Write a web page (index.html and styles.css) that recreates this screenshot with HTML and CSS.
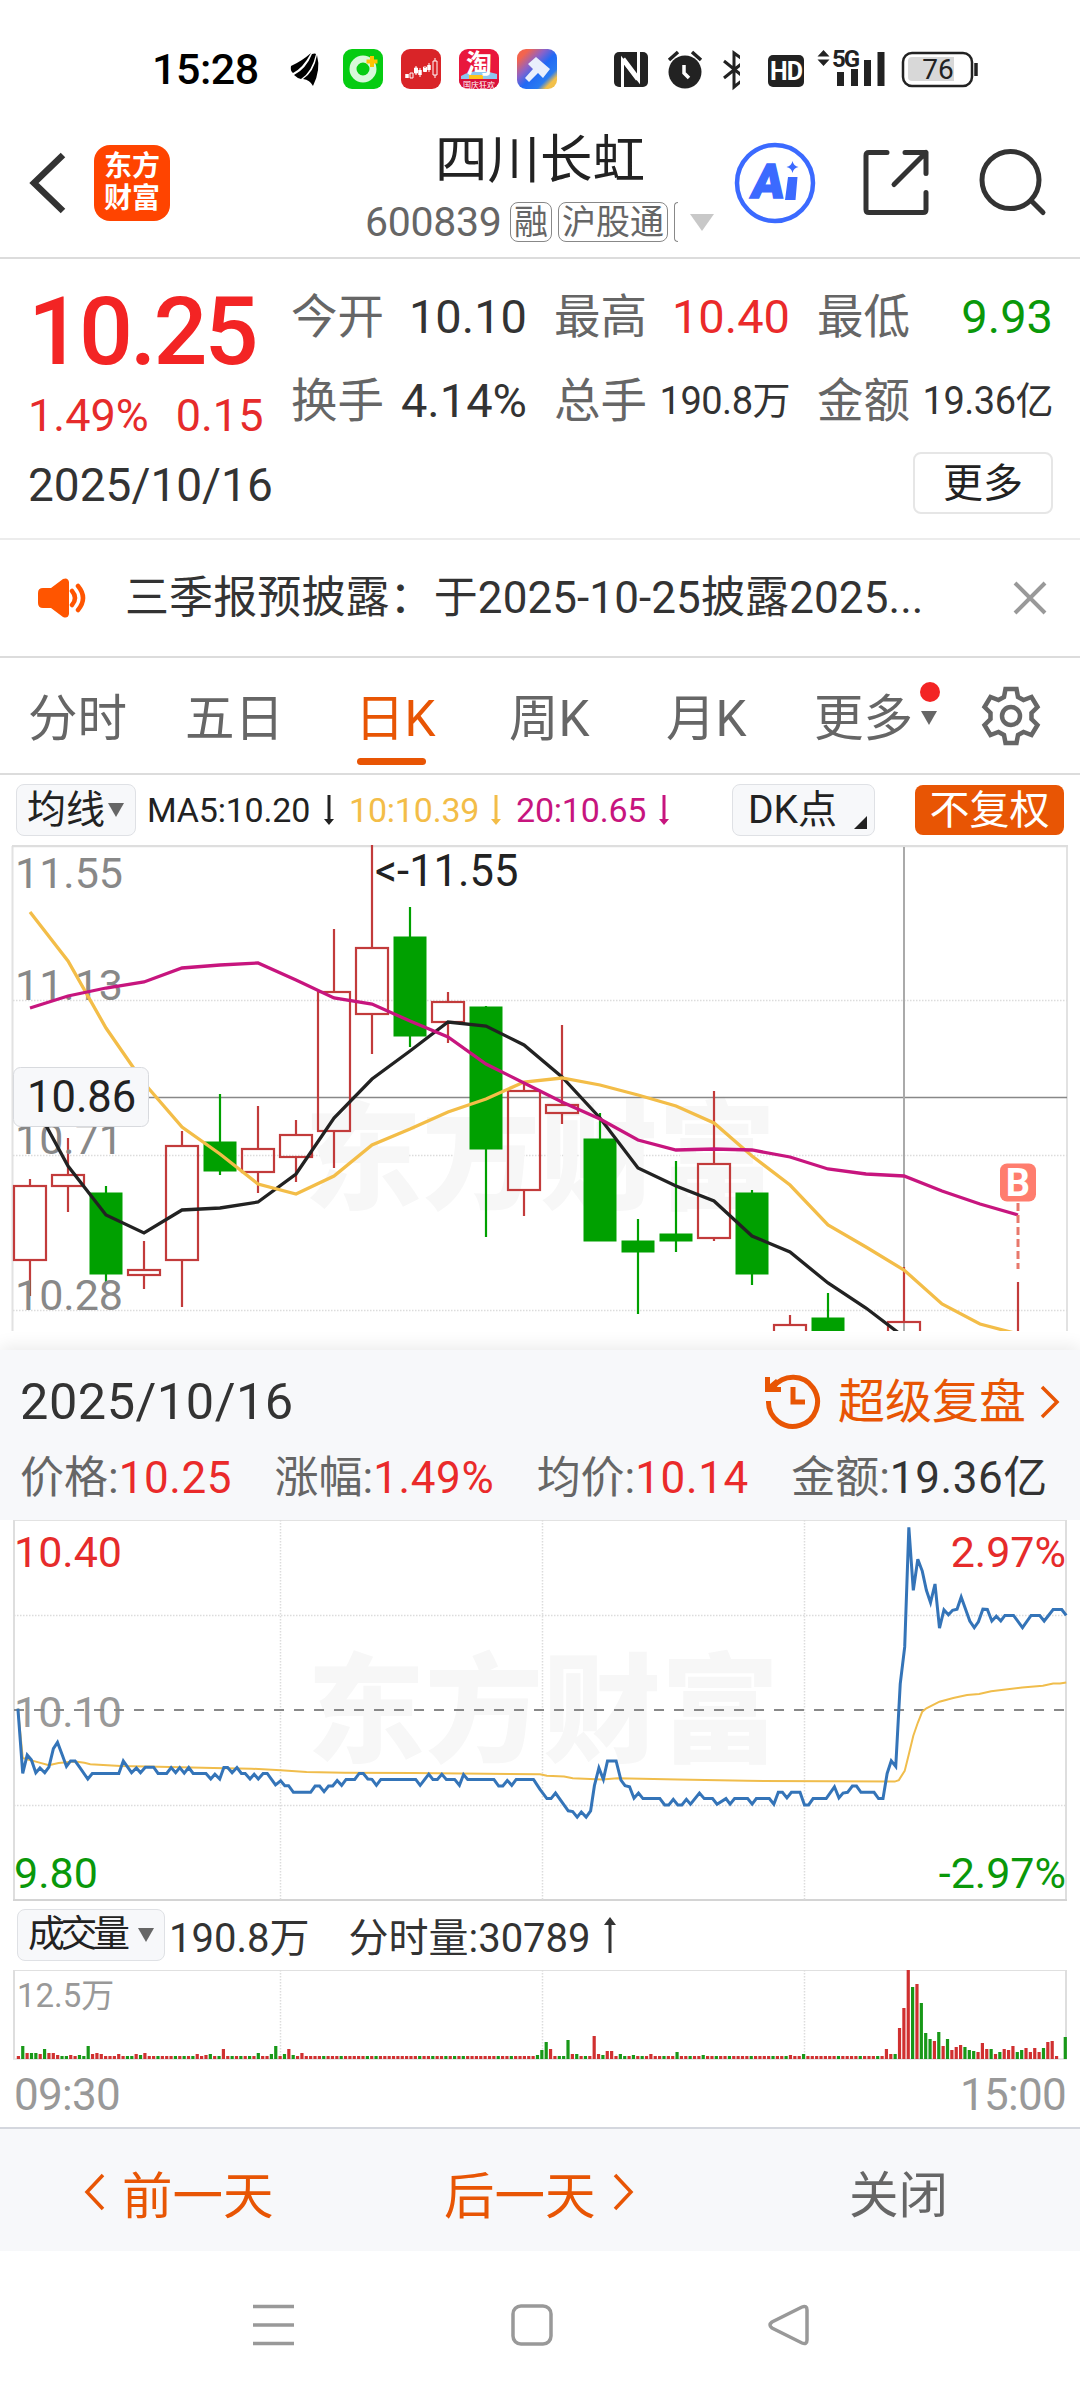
FILE: index.html
```html
<!DOCTYPE html>
<html lang="zh-CN">

<head>
    <meta charset="utf-8"/>
    <title>四川长虹 600839</title>
    <link rel="stylesheet" href="styles.css">
</head>

<body>
<div class="status">
    <span class="clock">15:28</span>
    <svg class="sIcons" width="460" height="60" viewBox="280 40 460 60">
        <!--通知图标-->
        <g fill="#000">
            <path d="M291 66Q302 61 311 53Q303 68 293 73Q290 71 291 66z"/>
            <path d="M294 75Q306 69 312 54Q315 53 316 54Q312 72 301 79Q297 78 294 75z"/>
            <path d="M303 79Q314 72 317 55Q321 70 313 86Q310 80 303 79z"/>
        </g>
        <rect x="343" y="49" width="40" height="40" rx="9" fill="#06cc12"/>
        <circle cx="363" cy="69" r="10" fill="none" stroke="#d8f8da" stroke-width="7"/>
        <path d="M372 56v11M366.500 61.500h11" stroke="#ffc400" stroke-width="4"/>
        <rect x="401" y="49" width="40" height="40" rx="9" fill="#d92428"/>
        <path d="M407 74v4M416 68v5M420 70v5M429 65v5M425 68v4" stroke="#fff" stroke-width="3.500"/>
        <path d="M410 73h3v5h-3zM414.500 68h3v5h-3zM423.500 67h3v4h-3zM433 61h4v14h-4zM435 58v3M435 75v3M416 66v9M420 68v9M429 63v9" stroke="#fff" fill="none"/>
        <rect x="459" y="49" width="40" height="40" rx="9" fill="#e9173d"/>
        <path d="M461 76q15-9 36-2v7h-36z" fill="#8dc7f0"/>
        <path d="M469 75h14v5h-14z" fill="#ffc21a"/>
        <path d="M459 79h40v1a9 9 0 0 1-9 9h-22a9 9 0 0 1-9-9z" fill="#d9103a"/>
        <text x="479" y="73" class="tao">淘</text>
        <text x="479" y="87.500" class="taoSub">国庆狂欢</text>
        <defs>
            <linearGradient id="brush" x1="0" y1=".3" x2=".7" y2="1">
                <stop offset="0" stop-color="#f3644e"/>
                <stop offset=".3" stop-color="#8c62c8"/>
                <stop offset=".55" stop-color="#2169f5"/>
                <stop offset=".85" stop-color="#2a7cf0"/>
                <stop offset="1" stop-color="#f2c04a"/>
            </linearGradient>
        </defs>
        <rect x="517" y="49" width="40" height="40" rx="9" fill="url(#brush)"/>
        <path d="M536 57l14 12-7 9-5-5-9 9-4-4 8-9-5-5z" fill="#e9effc"/>
        <!--NFC 闹钟 蓝牙-->
        <rect x="614" y="52" width="34" height="35" rx="5" fill="#222"/>
        <path d="M622.500 87V60l16 20V52" fill="none" stroke="#fff" stroke-width="3"/>
        <path d="M623 59l15 20" stroke="#fff" stroke-width="5"/>
        <circle cx="685" cy="72" r="16.500" fill="#222"/>
        <path d="M669 60l9-8M701 60l-9-8" stroke="#222" stroke-width="3.500"/>
        <path d="M684 65v8l5 5" stroke="#fff" stroke-width="3.500" fill="none"/>
        <path d="M724 61l21 17-11 9V53l11 8-21 17" fill="none" stroke="#222" stroke-width="3"/>
    </svg>
    <svg width="230" height="60" viewBox="750 40 230 60">
        <rect x="768" y="55" width="36" height="32" rx="5" fill="#222"/>
        <text x="786" y="80" class="hd">HD</text>
        <path d="M823.500 50l6 6.500h-12zM823.500 66l6-6.500h-12z" fill="#222"/>
        <text x="832" y="67" class="fiveG">5G</text>
        <path d="M840.500 72v14M854.500 69v17M867.500 60v26M881 52v34" stroke="#222" stroke-width="7"/>
        <rect x="903" y="53" width="69" height="33" rx="9" fill="none" stroke="#222" stroke-width="2.500"/>
        <path d="M912 57h42v24h-42q-4 0-4-4v-16q0-4 4-4z" fill="#d8d8d8"/>
        <path d="M976 63v13" stroke="#222" stroke-width="3.500"/>
        <text x="938" y="79" class="power">76</text>
    </svg>
</div>

<div class="header">
    <svg class="back" width="40" height="70" viewBox="0 0 40 70"><path d="M35 7L6 35l29 28" fill="none" stroke="#333" stroke-width="6.500"/></svg>
    <div class="logo">东方<br>财富</div>
    <div class="title">
        <h1>四川长虹</h1>
        <div class="code"><span class="num">600839</span><i>融</i><i>沪股通</i><i class="cut"></i><b class="down"></b></div>
    </div>
    <svg class="tools" width="330" height="90" viewBox="730 138 330 90">
        <circle cx="775" cy="183" r="38" fill="none" stroke="#3b6aff" stroke-width="4.500"/>
        <text x="0" y="0" class="ai" transform="translate(766 198) skewX(-8)">A</text>
        <path d="M788 177h9.500l-2 23h-10.500zM792.500 161q1 5 6 6q-5 1-6 6q-1-5-6-6q5-1 6-6z" fill="#3b6aff"/>
        <g fill="none" stroke="#333" stroke-width="5" stroke-linecap="round" stroke-linejoin="round">
            <path d="M887 152.500h-18q-3 0-3 3v54q0 3 3 3h54q3 0 3-3v-17M905 152.500h21v21M926 152.500l-32 32"/>
            <circle cx="1010.500" cy="180" r="28.500"/>
            <path d="M1031 200.500l12 12"/>
        </g>
    </svg>
</div>

<div class="quote">
    <div class="price">
        <div class="now">10.25</div>
        <div class="change"><span>1.49%</span><span>0.15</span></div>
    </div>
    <div class="stats">
        <div><label>今开</label><span>10.10</span></div>
        <div><label>最高</label><span class="red">10.40</span></div>
        <div><label>最低</label><span class="green">9.93</span></div>
        <div><label>换手</label><span>4.14%</span></div>
        <div><label>总手</label><span class="small">190.8万</span></div>
        <div><label>金额</label><span class="small">19.36亿</span></div>
    </div>
    <div class="date">2025/10/16</div>
    <div class="moreBtn">更多</div>
</div>

<div class="notice">
    <svg width="50" height="42" viewBox="0 0 50 42">
        <path d="M5 11h8L25 2q5-2 6 3v32q-1 5-6 3L13 31H5q-5 0-5-5V16q0-5 5-5z" fill="#ff5500"/>
        <path d="M34 14q6 7 0 14M40 9q10 12 0 24" fill="none" stroke="#ff5500" stroke-width="4.500" stroke-linecap="round"/>
    </svg>
    <p>三季报预披露：于2025-10-25披露2025...</p>
    <svg width="34" height="34" viewBox="0 0 34 34"><path d="M2 2l30 30M32 2L2 32" stroke="#999" stroke-width="4"/></svg>
</div>

<div class="tabs">
    <span>分时</span>
    <span>五日</span>
    <span class="on">日K</span>
    <span>周K</span>
    <span>月K</span>
    <span class="last">更多<b class="down"></b><b class="dot"></b></span>
    <svg width="60" height="62" viewBox="-30 -31 60 62" fill="none" stroke="#666" stroke-width="4.500">
        <path d="M-5.500-27h11l1.500 8 5.500 3 8-3 6 10-6 6v6l6 6-6 10-8-3-5.500 3-1.500 8h-11l-1.500-8-5.500-3-8 3-6-10 6-6v-6l-6-6 6-10 8 3 5.500-3z"/>
        <circle r="9"/>
    </svg>
</div>

<div class="maBar">
    <span class="pick">均线<b class="down"></b></span>
    <span class="ma5">MA5:10.20</span>
    <svg class="ma5" width="10" height="30"><path d="M3.500 0h3v24H10l-5 6-5-6h3.500z"/></svg>
    <span class="ma10">10:10.39</span>
    <svg class="ma10" width="10" height="30"><path d="M3.500 0h3v24H10l-5 6-5-6h3.500z"/></svg>
    <span class="ma20">20:10.65</span>
    <svg class="ma20" width="10" height="30"><path d="M3.500 0h3v24H10l-5 6-5-6h3.500z"/></svg>
    <span class="pick dk">DK点<b class="corner"></b></span>
    <span class="fq">不复权</span>
</div>

<!--日K图-->
<svg class="kline" width="1080" height="486" viewBox="0 845 1080 486">
    <path d="M12.500 1331V846M1067 846v485" stroke="#e2e2e2" stroke-width="2" fill="none"/>
    <path d="M12 846H1068" stroke="#dedede" stroke-width="2.500"/>
    <path class="grid" d="M13 1000.500H1067M13 1155.500H1067M13 1310.500H1067"/>
    <text x="540" y="1200" class="mark">东方财富</text>
    <path d="M13 1097.500H1067" stroke="#888" stroke-width="1.500"/>
    <path d="M904 847V1331" stroke="#aaa" stroke-width="2"/>
    <g id="candles"></g>
    <g class="axis">
        <text x="15" y="887.500">11.55</text>
        <text x="15" y="999.500">11.13</text>
        <text x="15" y="1154">10.71</text>
        <text x="15" y="1309.500">10.28</text>
    </g>
    <g class="avg">
        <polyline stroke="#222" points="30,1096 68,1166 106,1215 144,1233 182,1210 220,1208 258,1202 296,1174 334,1118 372,1079 410,1051 448,1022 486,1026 524,1045 562,1077 600,1118 638,1168 676,1186 714,1201 752,1236 790,1252 828,1283 866,1308 904,1337"/>
        <polyline stroke="#f3bd48" points="30,912 68,961 106,1028 144,1083 182,1127 220,1154 258,1184 296,1194 334,1176 372,1145 410,1129 448,1112 486,1099 524,1082 562,1078 600,1085 638,1095 676,1106 714,1123 752,1156 790,1185 828,1225 866,1247 904,1270 942,1304 980,1324 1018,1334"/>
        <polyline stroke="#c7157e" points="30,1008 68,996 106,988 144,982 182,968 220,965 258,963 296,980 334,998 372,1004 410,1021 448,1037 486,1064 524,1083 562,1102 600,1119 638,1140 676,1150 714,1149 752,1150 790,1157 828,1169 866,1174 904,1176 942,1191 980,1204 1018,1215"/>
    </g>
    <text x="375" y="886" class="high">&lt;-11.55</text>
    <rect x="13.500" y="1067.500" width="135" height="59" rx="7" fill="#f7f8fa" stroke="#d8dade"/>
    <text x="27" y="1112" class="cross">10.86</text>
    <rect x="1000" y="1163.500" width="36" height="38" rx="7" fill="#ff7d6e"/>
    <text x="1018" y="1196" class="buy">B</text>
    <path d="M1018 1203v66" stroke="#e8786c" stroke-width="3" stroke-dasharray="8 4"/>
</svg>

<div class="panel">
    <div class="row">
        <span class="day">2025/10/16</span>
        <span class="replay">
            <svg width="56" height="56" viewBox="0 0 56 56" fill="none" stroke="#e85504" stroke-width="5">
                <path d="M3.500 27a24.500 24.500 0 1 0 5-14"/>
                <path d="M0 3h5v7l6-5 4 4-5 4h6v5H0z" fill="#e85504" stroke="none"/>
                <path d="M28 13v15h12"/>
            </svg>
            超级复盘
            <svg class="chev" width="20" height="34" viewBox="0 0 20 34"><path d="M2 2l15 15L2 32"/></svg>
        </span>
    </div>
    <div class="row info">
        <span>价格:<b class="red">10.25</b></span>
        <span>涨幅:<b class="red">1.49%</b></span>
        <span>均价:<b class="red">10.14</b></span>
        <span>金额:<b>19.36亿</b></span>
    </div>
</div>

<!--分时图-->
<svg class="minute" width="1080" height="381" viewBox="0 1520 1080 381">
    <path d="M14 1520.500H1066" stroke="#e2e2e2"/>
    <path d="M14 1520v380M1066 1520v380" stroke="#dedede" stroke-width="2"/>
    <path d="M13 1900H1067" stroke="#d4d4d4" stroke-width="2"/>
    <path class="grid" d="M14 1615.500H1066M14 1805.500H1066M280.500 1520V1900M542.500 1520V1900M804.500 1520V1900"/>
    <text x="543" y="1753" class="mark">东方财富</text>
    <g class="axis">
        <text x="14" y="1566.500" class="up">10.40</text>
        <text x="14" y="1726.500">10.10</text>
        <text x="14" y="1887.500" class="fall">9.80</text>
        <text x="1066" y="1566.500" class="up end">2.97%</text>
        <text x="1066" y="1887.500" class="fall end">-2.97%</text>
    </g>
    <path d="M14 1710H1066" stroke="#888" stroke-width="2" stroke-dasharray="10 10"/>
    <svg x="0" y="1520" width="1080" height="380" viewBox="0 487 3136 1027" preserveAspectRatio="none">
        <polyline class="avgLine" points="52,997 66,1130 91,1137 104,1140 142,1150 170,1144 218,1140 245,1143 262,1147 350,1152 460,1154 620,1157 730,1159 815,1163 890,1168 1000,1170 1200,1171 1568,1174 1588,1178 1638,1180 1663,1185 1748,1188 1793,1185 1968,1188 2168,1192 2598,1194 2610,1190 2627,1165 2639,1120 2652,1070 2665,1035 2678,1005 2690,996 2728,978 2768,968 2808,960 2843,957 2878,950 2968,940 3028,935 3058,929 3078,929 3096,926"/>
        <polyline class="priceLine" points="52,997 66,1172 79,1122 91,1135 104,1170 116,1157 130,1170 142,1155 155,1105 167,1088 180,1120 193,1153 205,1138 218,1138 231,1155 255,1187 268,1172 345,1172 358,1138 382,1170 396,1157 408,1170 422,1155 446,1155 459,1172 484,1172 497,1156 510,1170 522,1156 535,1171 548,1156 561,1172 598,1172 612,1187 624,1174 638,1187 650,1156 661,1156 674,1170 688,1156 701,1172 712,1172 726,1187 738,1174 750,1187 764,1172 776,1172 800,1203 815,1192 827,1205 838,1205 852,1223 902,1223 915,1206 928,1206 941,1221 954,1206 966,1206 979,1191 992,1204 1005,1188 1030,1188 1043,1172 1055,1172 1068,1187 1080,1188 1093,1204 1106,1188 1207,1188 1220,1204 1245,1174 1257,1188 1270,1188 1283,1174 1296,1188 1320,1188 1334,1204 1346,1175 1358,1188 1434,1188 1448,1206 1460,1206 1473,1191 1486,1204 1499,1188 1549,1188 1568,1215 1588,1240 1600,1240 1613,1225 1650,1273 1663,1275 1676,1290 1688,1276 1702,1290 1715,1273 1726,1205 1739,1157 1752,1188 1764,1138 1789,1138 1803,1190 1815,1205 1828,1208 1841,1239 1854,1225 1867,1240 1916,1240 1930,1257 1942,1257 1955,1242 1968,1257 1980,1257 1993,1242 2005,1255 2031,1225 2045,1240 2069,1240 2082,1255 2108,1240 2120,1255 2133,1240 2171,1240 2184,1255 2196,1240 2234,1240 2247,1255 2260,1223 2272,1223 2285,1238 2298,1223 2323,1223 2336,1257 2348,1257 2361,1240 2399,1240 2423,1208 2436,1238 2448,1225 2461,1223 2475,1206 2487,1206 2500,1223 2538,1223 2551,1240 2564,1240 2576,1172 2588,1138 2601,1153 2614,930 2627,830 2639,507 2652,677 2665,593 2678,625 2690,677 2702,710 2715,660 2728,779 2741,730 2754,743 2766,731 2779,728 2791,695 2816,760 2829,778 2841,762 2854,728 2867,729 2880,760 2893,747 2906,760 2918,745 2943,745 2969,778 2994,745 3019,745 3032,760 3058,729 3083,729 3096,745"/>
    </svg>
</svg>

<div class="volBar">
    <span class="pick"><em>成交量</em><b class="down"></b></span>
    <span>190.8万</span>
    <span class="tick">分时量:30789</span>
    <svg width="12" height="36"><path d="M4.500 36V8H0l6-8 6 8H7.500v28z" fill="#333"/></svg>
</div>
<svg class="volume" width="1080" height="91" viewBox="0 1969 1080 91">
    <path d="M13 1970.500H1067" stroke="#e0e0e0"/>
    <path d="M14 1970v89M1066 1970v89" stroke="#dedede" stroke-width="2"/>
    <path d="M13 2059H1067" stroke="#e0e0e0" stroke-width="1.500"/>
    <path class="grid" d="M280.500 1970V2059M542.500 1970V2059M804.500 1970V2059"/>
    <text x="17" y="2007" class="volMax">12.5万</text>
    <g id="volumes"></g>
</svg>
<div class="times"><span>09:30</span><span>15:00</span></div>

<div class="actions">
    <span class="prev"><svg class="chev" width="21" height="38" viewBox="0 0 21 38"><path d="M19 2L3 19l16 17"/></svg>前一天</span>
    <span class="next">后一天<svg class="chev" width="21" height="38" viewBox="0 0 21 38"><path d="M2 2l16 17L2 36"/></svg></span>
    <span class="close">关闭</span>
</div>

<div class="nav">
    <svg width="42" height="42" viewBox="0 0 42 42"><path d="M0 2.500h41M0 21h41M0 39.500h41"/></svg>
    <svg width="42" height="42" viewBox="0 0 42 42"><rect x="2" y="2" width="38" height="38" rx="8"/></svg>
    <svg width="42" height="42" viewBox="0 0 42 42"><path d="M34 3L4 18q-4 3 0 6l30 15q5 2 5-3V6q0-5-5-3z"/></svg>
</div>

<script src="chart.js"></script>
</body>
</html>
```
FILE: styles.css
```css
* {
    padding: 0;
    margin: 0;
    box-sizing: border-box;
}

body {
    width: 1080px;
    height: 2400px;
    background-color: #fff;
    color: #333;
    font-family: Roboto, "Noto Sans CJK SC", sans-serif;
}

svg {
    display: block;
    flex-shrink: 0;
}

i, em {
    font-style: normal;
}

.red {
    color: #ea2a2a;
}

.green {
    color: #0a980a;
}

.down {
    display: inline-block;
    border: 8px solid transparent;
    border-top: 14px solid #666;
    border-bottom: none;
}

/*状态栏*/
.status {
    display: flex;
    height: 100px;
    padding: 40px 0 0 152px;
}

.clock {
    width: 128px;
    line-height: 58px;
    font-size: 43px;
    font-weight: 500;
    letter-spacing: -.5px;
    color: #000;
}

.sIcons {
    margin-right: 10px;
}

.status text {
    text-anchor: middle;
}

.status .tao {
    font-size: 26px;
    font-weight: 700;
    fill: #fff;
}

.status .taoSub {
    font-size: 8px;
    fill: #fff;
}

.status .hd {
    font-size: 25px;
    font-weight: 700;
    letter-spacing: -1px;
    fill: #fff;
}

.status .fiveG {
    font-size: 24px;
    font-weight: 700;
    letter-spacing: -2px;
    text-anchor: start;
    fill: #222;
}

.status .power {
    font-size: 28px;
    fill: #222;
}

/*标题栏*/
.header {
    display: flex;
    height: 159px;
    padding-left: 28px;
    border-bottom: 2px solid #dcdcdc;
}

.back {
    margin-top: 48px;
}

.logo {
    width: 76px;
    height: 76px;
    margin: 45px 0 0 26px;
    padding-top: 6px;
    border-radius: 16px;
    background-color: #ff4400;
    color: #fff;
    font-size: 28px;
    font-weight: 700;
    line-height: 32px;
    text-align: center;
}

.title {
    width: 355px;
    margin-left: 195px;
}

.title h1 {
    margin: 28px 0 0 70px;
    font-size: 52.500px;
    font-weight: 400;
    line-height: 64px;
    color: #222;
}

.code {
    display: flex;
    align-items: center;
    margin-top: 9px;
    height: 42px;
    font-size: 41px;
    line-height: 42px;
    color: #666;
}

.code .num {
    width: 145px;
    letter-spacing: -.3px;
}

.code i {
    flex-shrink: 0;
    height: 40px;
    margin-right: 6px;
    padding: 0 3px;
    border: 1.500px solid #888;
    border-radius: 8px;
    font-size: 34px;
    line-height: 38px;
    white-space: nowrap;
}

.code .cut {
    width: 4px;
    margin-right: 12px;
    padding: 0;
    border-right: none;
    border-radius: 8px 0 0 8px;
}

.code .down {
    border-width: 17px 12px 0;
    border-top-color: #c8c8c8;
}

.tools {
    margin: 38px 0 0 10px;
}

.tools .ai {
    font-size: 48px;
    font-weight: 900;
    text-anchor: middle;
    fill: #3b6aff;
    stroke: #3b6aff;
    stroke-width: 1.500;
}

/*报价*/
.quote {
    display: grid;
    grid-template-columns: 262px 1fr;
    grid-template-rows: 168px 1fr;
    height: 281px;
    padding: 16px 28px 0 28px;
    border-bottom: 2px solid #ececec;
}

.now {
    height: 112px;
    line-height: 114px;
    font-size: 95px;
    font-weight: 500;
    letter-spacing: -3px;
    color: #f32424;
}

.change {
    display: flex;
    gap: 27px;
    font-size: 45px;
    line-height: 58px;
    color: #e62b2b;
}

.stats {
    display: grid;
    grid-template-columns: repeat(3, 236px);
    grid-auto-rows: 84px;
    gap: 0 27px;
    padding-left: 1px;
}

.stats div {
    display: flex;
    justify-content: space-between;
    line-height: 84px;
    font-size: 47px;
}

.stats label {
    font-size: 46.500px;
    color: #666;
}

.stats .small {
    font-size: 38px;
    letter-spacing: -.5px;
}

.date {
    margin-top: 12px;
    line-height: 60px;
    font-size: 46px;
}

.moreBtn {
    justify-self: end;
    width: 140px;
    height: 62px;
    margin-top: 9px;
    border: 2px solid #e6e6e6;
    border-radius: 8px;
    line-height: 60px;
    font-size: 40px;
    text-align: center;
    color: #222;
}

.notice {
    display: flex;
    align-items: center;
    height: 118px;
    padding: 0 33px 0 38px;
    border-bottom: 2px solid #dcdcdc;
}

.notice p {
    flex: 1;
    padding-left: 37px;
    font-size: 44px;
    line-height: 60px;
    letter-spacing: .1px;
}

/*周期切换*/
.tabs {
    display: flex;
    height: 117px;
    padding-left: 28px;
    border-bottom: 2px solid #dcdcdc;
    font-size: 49.500px;
    line-height: 122px;
    color: #666;
}

.tabs span {
    width: 157px;
}

.tabs .on {
    position: relative;
    width: 167px;
    padding-left: 13px;
    color: #e85504;
}

.tabs .on::after {
    content: "";
    position: absolute;
    left: 15px;
    bottom: 8px;
    width: 69px;
    height: 7px;
    border-radius: 4px;
    background-color: #e85504;
}

.tabs span:nth-child(5) {
    width: 148px;
}

.tabs .last {
    position: relative;
    width: 167px;
}

.tabs .down {
    margin: 0 0 11px 8px;
}

.dot {
    position: absolute;
    left: 106px;
    top: 24px;
    width: 20px;
    height: 20px;
    border-radius: 50%;
    background-color: #f32424;
}

.tabs svg {
    margin-top: 27px;
}

/*均线*/
.maBar {
    display: flex;
    align-items: center;
    height: 70px;
    padding: 0 0 0 16px;
    font-size: 34px;
}

.pick {
    display: flex;
    align-items: center;
    width: 120px;
    height: 52px;
    padding-left: 10px;
    border: 1.500px solid #dfe1e5;
    border-radius: 8px;
    background-color: #f7f8fa;
    font-size: 39px;
    line-height: 52px;
    color: #222;
}

.pick .down {
    margin-left: 3px;
}

.ma5 {
    color: #222;
    fill: #222;
}

.ma10 {
    color: #f3bd48;
    fill: #f3bd48;
}

.ma20 {
    color: #c7157e;
    fill: #c7157e;
}

span.ma5 {
    width: 188px;
    padding-left: 11px;
    letter-spacing: -.2px;
}

span.ma10, span.ma20 {
    width: 143px;
    margin-left: 15px;
    letter-spacing: -.2px;
}

svg.ma10 {
    margin-left: -1px;
}

.maBar .dk {
    position: relative;
    width: 143px;
    margin-left: 63px;
    padding-left: 15px;
}

.corner {
    position: absolute;
    right: 7px;
    bottom: 6px;
    border-left: 13px solid transparent;
    border-bottom: 13px solid #222;
}

.fq {
    width: 149px;
    height: 50px;
    margin-left: 40px;
    border-radius: 8px;
    background-color: #e85504;
    color: #fff;
    font-size: 40px;
    line-height: 52px;
    text-align: center;
}

/*图表*/
.grid {
    fill: none;
    stroke: #dcdcdc;
    stroke-width: 1.500;
    stroke-dasharray: 1.500 1.500;
}

.mark {
    font-size: 118px;
    font-weight: 900;
    text-anchor: middle;
    fill: #f7f7f7;
}

.axis {
    font-size: 43px;
    fill: #888;
}

.axis .up {
    fill: #e62b2b;
}

.axis .fall {
    fill: #0a980a;
}

.axis .end {
    text-anchor: end;
}

.minute .axis {
    fill: #999;
}

.avg {
    fill: none;
    stroke-width: 3.300;
}

.high, .cross {
    font-size: 43.500px;
    fill: #222;
}

.buy {
    font-size: 38px;
    font-weight: 700;
    text-anchor: middle;
    fill: #fff;
}

.avgLine, .priceLine {
    fill: none;
    stroke: #f0bd4c;
    stroke-width: 2;
    vector-effect: non-scaling-stroke;
}

.priceLine {
    stroke: #3474b8;
    stroke-width: 3;
}

/*复盘面板*/
.panel {
    position: relative;
    height: 170px;
    margin-top: 19px;
    padding: 14px 17px 0 20px;
    background-color: #f7f8fa;
    box-shadow: 0 -4px 16px rgba(0, 0, 0, .08);
    clip-path: inset(-19px 0 0 0);
}

.row {
    display: flex;
    justify-content: space-between;
    line-height: 76px;
}

.day {
    font-size: 50.500px;
    letter-spacing: .5px;
}

.replay {
    display: flex;
    align-items: center;
    font-size: 47px;
    color: #e85504;
}

.replay svg {
    margin-right: 17px;
}

.chev {
    fill: none;
    stroke: #e85504;
    stroke-width: 3.500;
}

.replay .chev {
    margin: 0 3px 0 14px;
}

.info {
    padding-right: 15px;
    font-size: 44px;
    color: #666;
}

.info b {
    font-weight: 400;
    letter-spacing: .6px;
    color: #333;
}

.info .red {
    color: #ea2a2a;
}

.volBar {
    display: flex;
    align-items: center;
    height: 68px;
    padding-left: 17px;
    font-size: 40px;
}

.volBar .pick {
    width: 148px;
    margin-right: 4px;
}

.volBar em {
    display: inline-block;
    width: 98px;
    font-size: 37px;
    line-height: 54px;
    letter-spacing: -4.500px;
    white-space: nowrap;
}

.volBar .down {
    margin-left: 12px;
}

.tick {
    margin: 0 13px 0 39px;
}

.volMax {
    font-size: 33px;
    fill: #999;
}

.times {
    display: flex;
    justify-content: space-between;
    height: 67px;
    padding: 0 14px;
    font-size: 44px;
    line-height: 70px;
    letter-spacing: -.7px;
    color: #999;
}

.actions {
    display: flex;
    height: 124px;
    padding-top: 3px;
    border-top: 2px solid #d4d7de;
    background-color: #f7f8fa;
    font-size: 50.500px;
    color: #e85504;
}

.actions span {
    display: flex;
    align-items: center;
    width: 360px;
}

.prev {
    padding-left: 84px;
}

.prev svg {
    margin-right: 17px;
}

.next {
    padding-left: 84px;
}

.next svg {
    margin-left: 17px;
}

.actions .close {
    padding-left: 129px;
    font-size: 49.500px;
    color: #666;
}

.nav {
    display: flex;
    justify-content: space-between;
    padding: 53px 270px 0 253px;
    fill: none;
    stroke: #999;
    stroke-width: 3.500;
}
```
FILE: chart.js
```js
var RED = "#c23b3b";
var GREEN = "#00a000";
//K线数据: 中心x, 颜色, 最高, 实体上, 实体下, 最低
var candles = [
    [30, "r", 1179, 1186, 1260, 1296],
    [68, "r", 1138, 1175, 1186, 1212],
    [106, "g", 1186, 1193, 1274, 1284],
    [144, "r", 1241, 1270, 1275, 1289],
    [182, "r", 1131, 1146, 1260, 1307],
    [220, "g", 1094, 1142, 1171, 1175],
    [258, "r", 1106, 1149, 1172, 1193],
    [296, "r", 1120, 1135, 1157, 1182],
    [334, "r", 929, 992, 1131, 1168],
    [372, "r", 845, 948, 1014, 1054],
    [410, "g", 907, 937, 1036, 1047],
    [448, "r", 992, 1002, 1022, 1043],
    [486, "g", 1006, 1007, 1149, 1237],
    [524, "r", 1083, 1091, 1190, 1216],
    [562, "r", 1025, 1105, 1113, 1124],
    [600, "g", 1113, 1139, 1241, 1241],
    [638, "g", 1219, 1241, 1252, 1314],
    [676, "g", 1161, 1234, 1241, 1252],
    [714, "r", 1091, 1164, 1238, 1241],
    [752, "g", 1190, 1193, 1274, 1285],
    [790, "r", 1315, 1325, 1350, 1350],
    [828, "g", 1293, 1318, 1350, 1350],
    [904, "r", 1267, 1322, 1350, 1350],
    [1018, "r", 1282, 1340, 1350, 1350]
];
//成交量: 颜色+高度, x后面是重复次数
var volumes = "r3 g13 r6 g6x2 r5 g10 r6x2 r4 g3x2 r4 r3 g4 g3 g13 r5 r6 r5 r3x3 r5 r3 g3x2 r5 g4 r6 r3x2 g3 r3x3 g3 r3 g3 r3 g3 " +
    "r5 r3 r4 g5 r3 g3 r10 r3 g3 r3 g3 r3 g3 r3 g6 r3x2 g5 g13 r3 g5 r10 g4 r3 r6 r3x4 g3 r3x3 g3 r3x5 g3 r3 g3 r3x9 g3 r3x2 g3 " +
    "r3x2 g3 r3 g3 r3 g3 r3x7 g3 r3x2 g3 r3x5 g4 g9 g17 r10 r3 g3x2 g19 r5 g5 r3 g3 r3 r23 r5 g4 r8x2 r3 g5 g3 r3 g4 r3 g3 r3 r5 " +
    "r3x2 g3 r3x2 g7 r3x2 g3 r3x2 g4 r3x2 g3 r3x2 g3 r3x4 g3 r3x4 g3 r3x2 g3 r4 r3x2 g5 r3x7 g3 r3x4 g3 r3x3 g3 r3 r10 r5 g5 " +
    "r31 r51 r89 g72 r75 g56 g26 g20 r18 g27 r13 g20 r9 r12 r14 g12 g9 g8 r7 r16 r10 g10 r5 g7 r10 r9 r13 g7 g9 r11 r7 r11 r7 g11 r17 r18 r3 r0 g22";

function drawCandles() {
    var html = "";
    for (var i = 0; i < candles.length; i++) {
        var c = candles[i];
        var color = c[1] === "r" ? RED : GREEN;
        //影线
        html += '<path d="M' + c[0] + ' ' + c[2] + 'V' + c[3] + 'M' + c[0] + ' ' + c[4] + 'V' + c[5] + '" stroke="' + color + '" stroke-width="2.2"/>';
        //实体
        html += '<rect x="' + (c[0] - 16) + '" y="' + c[3] + '" width="32" height="' + (c[4] - c[3]) +
            '" fill="' + (c[1] === "r" ? "none" : GREEN) + '" stroke="' + color + '" stroke-width="' + (c[1] === "r" ? 2.2 : 1) + '"/>';
    }
    document.getElementById("candles").innerHTML = html;
}

function drawVolumes() {
    var html = "";
    var x = 16.8;
    volumes.split(" ").forEach(function (item) {
        var p = item.slice(1).split("x");
        for (var n = 0; n < (p[1] || 1); n++) {
            html += '<rect x="' + x.toFixed(2) + '" y="' + (2059 - p[0]) + '" width="3.2" height="' + p[0] +
                '" fill="' + (item[0] === "r" ? "#d03030" : "#189818") + '"/>';
            x += 4.362;
        }
    });
    document.getElementById("volumes").innerHTML = html;
}

drawCandles();
drawVolumes();
```
